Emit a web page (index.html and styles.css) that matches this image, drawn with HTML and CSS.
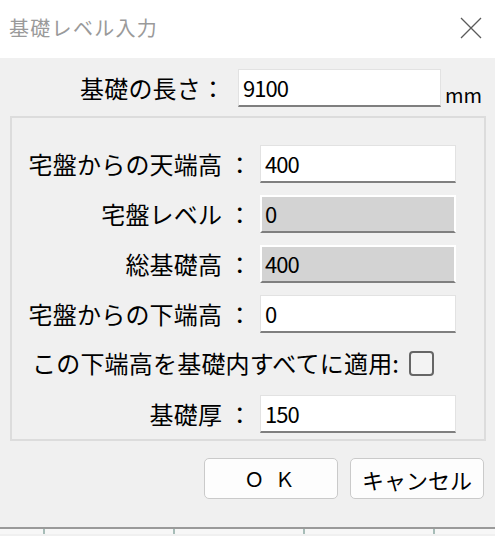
FILE: index.html
```html
<!DOCTYPE html>
<html lang="ja">
<head>
<meta charset="utf-8">
<title>基礎レベル入力</title>
<link rel="stylesheet" href="styles.css">
</head>
<body>
<div class="dialog">
  <div class="titlebar">
    <span class="title">基礎レベル入力</span>
    <svg class="close" width="22" height="22" viewBox="0 0 22 22"><path d="M1 1 L21 21 M21 1 L1 21" stroke="#5a5a5a" stroke-width="1.3" fill="none"/></svg>
  </div>
  <div class="content">
    <div class="toprow">
      <span class="label">基礎の長さ：</span>
      <div class="field">9100</div>
      <span class="unit">mm</span>
    </div>
    <div class="group">
      <span class="label">宅盤からの天端高 ：</span>
      <div class="field">400</div>
      <span class="label">宅盤レベル ：</span>
      <div class="field readonly">0</div>
      <span class="label">総基礎高 ：</span>
      <div class="field readonly">400</div>
      <span class="label">宅盤からの下端高 ：</span>
      <div class="field">0</div>
      <div class="checkrow">
        <span class="label">この下端高を基礎内すべてに適用:</span>
        <span class="checkbox"></span>
      </div>
      <span class="label">基礎厚 ：</span>
      <div class="field">150</div>
    </div>
    <div class="buttons">
      <div class="btn ok">Ｏ Ｋ</div>
      <div class="btn">キャンセル</div>
    </div>
  </div>
</div>
<div class="backdrop">
  <span class="cell c0"></span><span class="cell"></span><span class="cell"></span><span class="cell"></span><span class="cell last"></span>
</div>
</body>
</html>
```
FILE: styles.css
```css
html, body {
  margin: 0;
  padding: 0;
}
body {
  width: 495px;
  height: 536px;
  overflow: hidden;
  background: #f0f0f0;
  font-family: "Noto Sans CJK JP", "Noto Sans", sans-serif;
  color: #000;
}
.dialog {
  height: 529px;
  background: #f0f0f0;
  border-bottom: 2px solid #9a9a9a;
  box-sizing: border-box;
  display: flex;
  flex-direction: column;
}
.titlebar {
  height: 58px;
  background: #ffffff;
  display: flex;
  align-items: center;
  justify-content: space-between;
  padding: 0 13px 2px 9px;
  box-sizing: border-box;
}
.title {
  font-size: 20px;
  color: #9a9a9a;
  letter-spacing: 1.3px;
  line-height: 1;
}
.close {
  display: block;
  margin-top: -1px;
}
.content {
  display: flex;
  flex-direction: column;
  padding: 11px 9px 0 10px;
}
.toprow {
  display: flex;
  align-items: center;
  height: 38px;
}
.toprow .label {
  margin-left: 70px;
  width: 143px;
  text-align: right;
}
.toprow .field {
  margin-left: 15px;
  width: 203px;
}
.unit {
  font-size: 20px;
  align-self: flex-end;
  margin-left: 4px;
  line-height: 1;
  margin-bottom: 2px;
}
.label {
  font-size: 24px;
  line-height: 1;
  white-space: nowrap;
  letter-spacing: 0.2px;
}
.field {
  height: 38px;
  box-sizing: border-box;
  background: #ffffff;
  border: 1px solid #e2e2e2;
  border-bottom: 2px solid #7f7f7f;
  font-size: 22px;
  letter-spacing: -1px;
  line-height: 34px;
  padding-left: 4px;
}
.field.readonly {
  background: #d3d3d3;
  border: 2px solid #ffffff;
  border-bottom: 2px solid #7f7f7f;
  line-height: 33px;
  padding-left: 3px;
}
.group {
  margin-top: 9px;
  border: 2px solid #dcdcdc;
  height: 325px;
  box-sizing: border-box;
  display: grid;
  grid-template-columns: 1fr 196px;
  grid-auto-rows: 38px;
  column-gap: 8px;
  row-gap: 12px;
  align-items: center;
  padding: 27px 28px 0 10px;
}
.group .label {
  text-align: right;
}
.checkrow {
  grid-column: 1 / 3;
  display: flex;
  align-items: center;
  padding-left: 10px;
  height: 25px;
  margin-top: -2px;
}
.checkbox {
  width: 25px;
  height: 25px;
  box-sizing: border-box;
  border: 2px solid #666666;
  border-radius: 4px;
  background: #f3f3f3;
  margin-left: 10px;
}
.buttons {
  display: flex;
  justify-content: flex-end;
  gap: 12px;
  margin-top: 17px;
  padding-right: 2px;
}
.btn {
  width: 134px;
  height: 41px;
  box-sizing: border-box;
  border: 1.5px solid #cacaca;
  border-radius: 5px;
  background: #fdfdfd;
  font-size: 22px;
  display: flex;
  align-items: center;
  justify-content: center;
  letter-spacing: 0;
}
.btn.ok {
  font-size: 20px;
  letter-spacing: 3px;
}
.backdrop {
  display: flex;
  height: 5px;
  background: #f7f7f7;
  overflow: hidden;
}
.cell {
  flex: none;
  width: 128px;
  border-left: 2px solid #a7bdb8;
}
.cell.c0 {
  width: 43px;
  border-left: none;
}
.cell.last {
  flex: 1;
  width: auto;
}
```
